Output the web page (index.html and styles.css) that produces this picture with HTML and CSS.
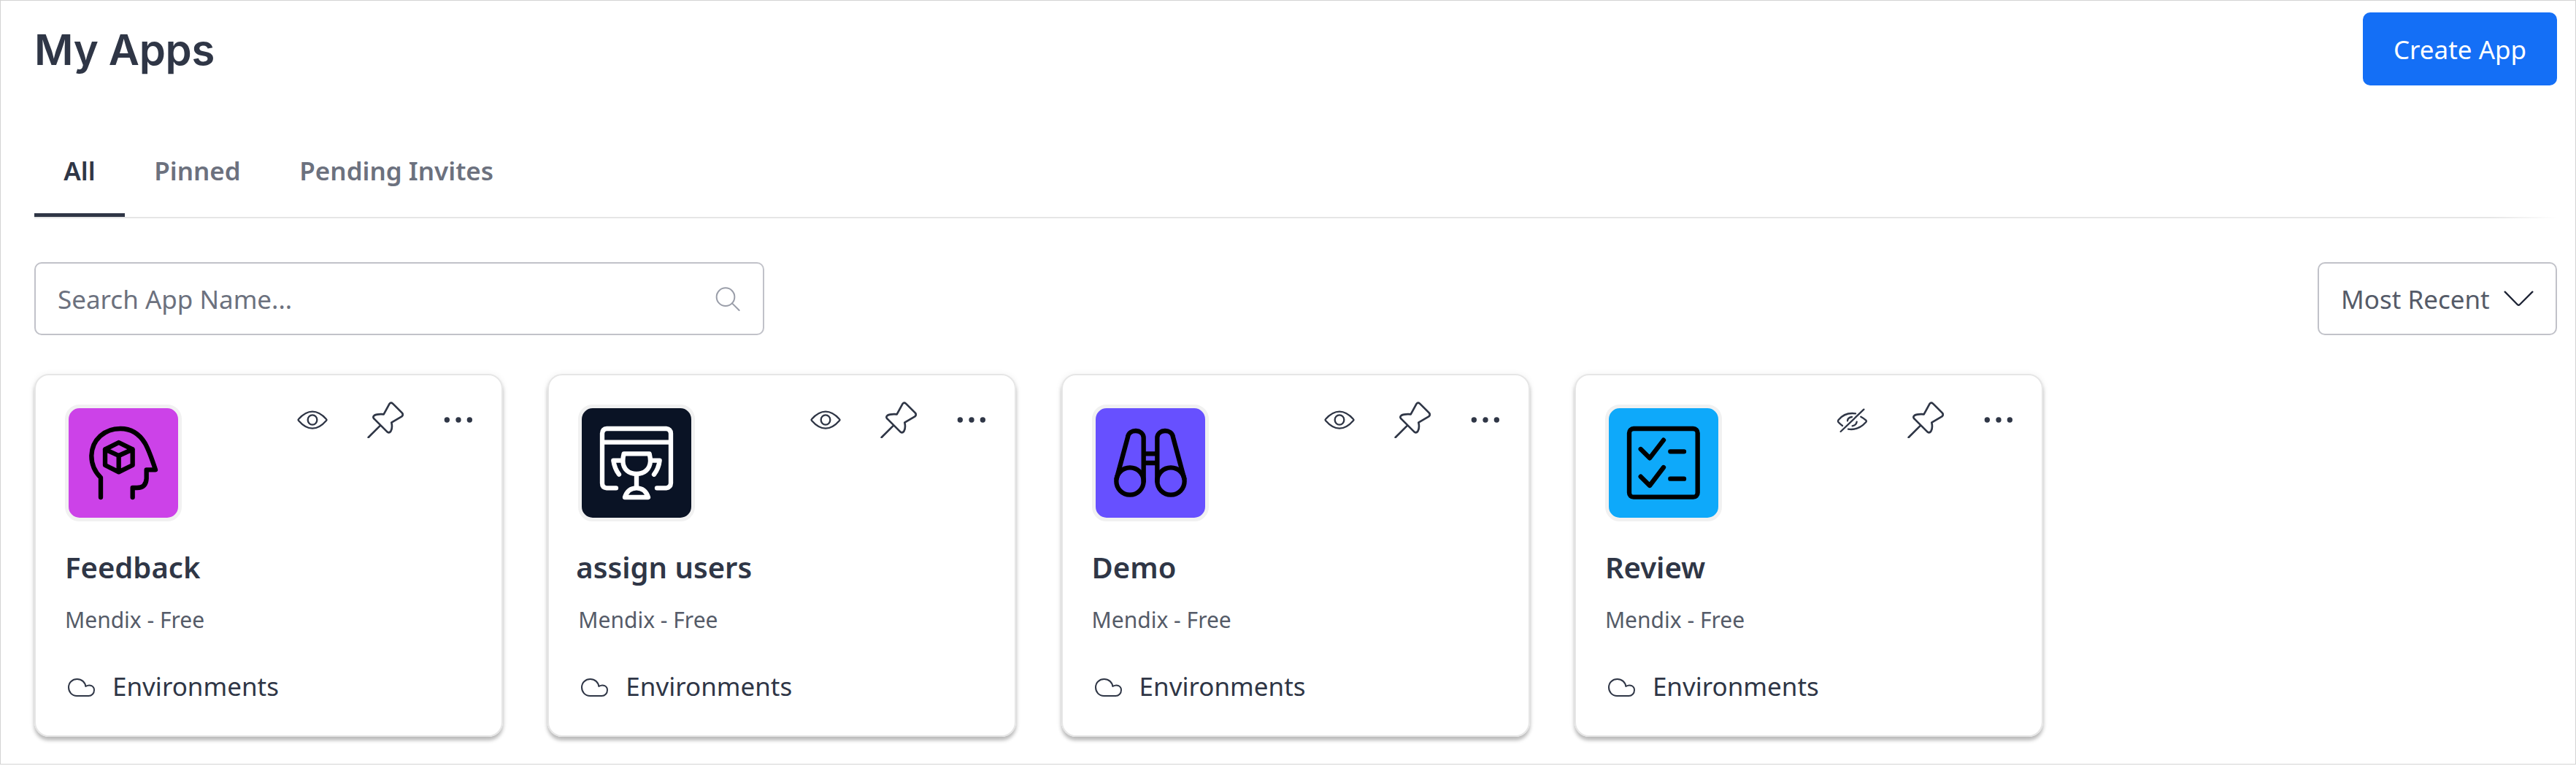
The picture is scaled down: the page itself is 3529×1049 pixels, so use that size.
FILE: index.html
```html
<!DOCTYPE html>
<html lang="en">
<head>
<meta charset="utf-8">
<title>My Apps</title>
<link rel="stylesheet" href="styles.css">
</head>
<body>
<svg class="defs" aria-hidden="true">
  <symbol id="eye" viewBox="39 43 150 150">
    <path d="M57 115Q85 84 114 84T171 115Q174 118 171 121Q143 153 114 153T57 121Q54 118 57 115Z" stroke-width="7"/>
    <ellipse cx="114" cy="118" rx="19" ry="20" stroke-width="7"/>
  </symbol>
  <symbol id="eye-off" viewBox="41 28 150 150">
    <path d="M74 127Q64 120 58 113Q54 108 58 103Q84 71 128 77M150 90Q163 97 171 105Q174 108 171 112Q140 147 98 141M95 107Q95 94 113 91M133 111Q131 125 115 128M67 151L162 60" stroke-width="7"/>
  </symbol>
  <symbol id="pin" viewBox="339 43 150 150" overflow="visible">
    <path d="M407 95L430 53Q436 44 444 51L483 90Q489 98 481 104L439 129Q444 151 436 165Q430 173 422 168L368 114Q360 107 368 100Q380 93 407 95ZM391 143L344 190" stroke-width="8"/>
  </symbol>
  <symbol id="dots" viewBox="639 43 150 150">
    <g class="solid"><circle cx="667" cy="118" r="11"/><circle cx="714" cy="118" r="11"/><circle cx="760" cy="118" r="11"/></g>
  </symbol>
  <symbol id="cloud" viewBox="147 51 132 132">
    <path d="M196 156C176 156 162 141 162 121C162 101 177 87 197 87C216 87 230 100 232 117C250 106 267 116 267 132C267 146 257 156 244 156Z" stroke-width="6"/>
  </symbol>
</svg>
<main class="page">
  <header class="header">
    <h1 class="title">My Apps</h1>
    <button class="create">Create App</button>
  </header>
  <nav class="tabs">
    <a class="tab active">All</a>
    <a class="tab">Pinned</a>
    <a class="tab">Pending Invites</a>
  </nav>
  <div class="rule"></div>
  <div class="filters">
    <div class="search">
      <span>Search App Name...</span>
      <svg class="search-icon" viewBox="240 157 105 105"><circle cx="282" cy="201" r="37"/><path d="M309 227L338 256"/></svg>
    </div>
    <div class="sort">
      <span>Most Recent</span>
      <svg class="chevron" viewBox="905 1196 123 66"><path d="M910 1201L961 1253Q966 1258 971 1253L1023 1201"/></svg>
    </div>
  </div>
  <section class="cards">
    <article class="card">
      <div class="card-top">
        <svg class="tile feedback" viewBox="27 27 450 450">
          <path d="M159 393V312Q121 275 121 222C123 155 175 111 240 111C294 111 324 143 341 171Q358 201 384 280H347V316Q345 354 308 354H290V393"/>
          <path d="M233 168L290 196V261L233 289L177 261V196ZM177 196L233 222L290 196M233 222V289"/>
        </svg>
        <div class="actions"><svg><use href="#eye"/></svg><svg><use href="#pin"/></svg><svg><use href="#dots"/></svg></div>
      </div>
      <h2 class="name">Feedback</h2>
      <p class="plan">Mendix - Free</p>
      <div class="env"><svg><use href="#cloud"/></svg><span>Environments</span></div>
    </article>
    <article class="card">
      <div class="card-top">
        <svg class="tile assign" viewBox="27 27 450 450">
          <path d="M168 355H130Q111 353 111 335V131Q112 112 130 111H374Q392 113 393 131V335Q392 353 374 355H336M111 167H393"/>
          <path d="M200 214H305Q309 232 309 244C307 278 284 297 252 297C220 297 197 278 196 244Q196 230 200 214ZM196 242H157Q162 275 180 299M309 242H347Q343 275 324 299M252 297V355M204 393Q216 355 252 355T300 393Z"/>
        </svg>
        <div class="actions"><svg><use href="#eye"/></svg><svg><use href="#pin"/></svg><svg><use href="#dots"/></svg></div>
      </div>
      <h2 class="name outdent">assign users</h2>
      <p class="plan">Mendix - Free</p>
      <div class="env"><svg><use href="#cloud"/></svg><span>Environments</span></div>
    </article>
    <article class="card">
      <div class="card-top">
        <svg class="tile demo" viewBox="27 27 450 450">
          <circle cx="168" cy="327" r="56"/><circle cx="336" cy="327" r="56"/>
          <path d="M113 316L159 146C163 111 222 111 224 148V327M391 316L345 146C341 111 282 111 280 148V327M224 214H280M224 252H280"/>
        </svg>
        <div class="actions"><svg><use href="#eye"/></svg><svg><use href="#pin"/></svg><svg><use href="#dots"/></svg></div>
      </div>
      <h2 class="name">Demo</h2>
      <p class="plan">Mendix - Free</p>
      <div class="env"><svg><use href="#cloud"/></svg><span>Environments</span></div>
    </article>
    <article class="card">
      <div class="card-top">
        <svg class="tile review" viewBox="27 27 450 450">
          <rect x="111" y="111" width="281" height="281" rx="18"/>
          <path d="M158 195L195 232L252 158M158 308L195 345L252 270M280 205H336M280 317H336"/>
        </svg>
        <div class="actions"><svg><use href="#eye-off"/></svg><svg><use href="#pin"/></svg><svg><use href="#dots"/></svg></div>
      </div>
      <h2 class="name">Review</h2>
      <p class="plan">Mendix - Free</p>
      <div class="env"><svg><use href="#cloud"/></svg><span>Environments</span></div>
    </article>
  </section>
</main>
</body>
</html>
```

FILE: styles.css
```css
* { box-sizing: border-box; }
body {
  margin: 0;
  background: #fff;
  color: #2f3646;
  font-family: "Noto Sans", sans-serif;
  font-size: 35px;
}
svg {
  display: block;
  flex: none;
  fill: none;
  stroke: #2f3646;
  stroke-linecap: round;
  stroke-linejoin: round;
}
.defs { display: none; }
.solid { fill: #2f3646; stroke: none; }
.page {
  height: 1047px;
  padding: 16px 25px 0 46px;
  border: 1px solid #d3d3d3;
}
.header {
  display: flex;
  justify-content: space-between;
  align-items: center;
  height: 100px;
}
.title {
  margin: 0;
  padding-top: 1px;
  font: 600 58px/100px Inter, sans-serif;
  letter-spacing: -0.3px;
}
.create {
  width: 266px;
  height: 100px;
  padding: 0;
  border: 0;
  border-radius: 10px;
  background: #146ff6;
  color: #fff;
  font: inherit;
}
.tabs { display: flex; margin-top: 60px; }
.tab {
  padding: 32px 40.3px 33px;
  border-bottom: 5px solid transparent;
  color: #6c717e;
  font-weight: 600;
  line-height: 50px;
}
.tab.active { color: #2f3646; border-color: #2f3646; }
.rule { height: 2px; background: linear-gradient(to right, #e6e6e6 calc(100% - 90px), #fff); }
.filters { display: flex; justify-content: space-between; margin-top: 60px; }
.search, .sort {
  display: flex;
  align-items: center;
  justify-content: space-between;
  height: 100px;
  padding: 0 30px;
  border: 2px solid #c1c2c9;
  border-radius: 10px;
}
.search { width: 1000px; color: #6c717e; }
.sort { width: 328px; color: #555b68; }
.search-icon { width: 35px; height: 35px; stroke: #9a9ea9; stroke-width: 6; }
.chevron { width: 41px; height: 22px; stroke: #1e2435; stroke-width: 7; }
.cards { display: flex; gap: 61.3px; margin-top: 53px; }
.card {
  flex: none;
  width: 642px;
  height: 497px;
  padding: 40px 34px 0 40px;
  border: 2px solid #e6e6e6;
  border-radius: 20px;
  box-shadow: 0 5px 5px rgba(0, 0, 0, 0.25), 0 0 10px rgba(0, 0, 0, 0.06);
}
.card-top { display: flex; justify-content: space-between; }
.tile {
  width: 160px;
  height: 160px;
  border: 5px solid #f1f1f1;
  border-radius: 20px;
  stroke: #000;
  stroke-width: 19;
}
.feedback { background: #cc42e8; }
.assign { background: #0a1325; stroke: #fff; }
.demo { background: #6750ff; }
.review { background: #0ea9fa; }
.actions { display: flex; gap: 50px; margin-top: -4px; }
.actions svg { width: 50px; height: 50px; }
.name { margin: 35px 0 0; font-size: 40px; font-weight: 600; line-height: 56px; }
.outdent { margin-left: -3px; }
.plan { margin: 24px 0 0; color: #555b68; font-size: 30px; line-height: 40px; }
.env { display: flex; align-items: center; gap: 21px; margin-top: 47px; line-height: 48px; }
.env svg { width: 44px; height: 44px; }
```
